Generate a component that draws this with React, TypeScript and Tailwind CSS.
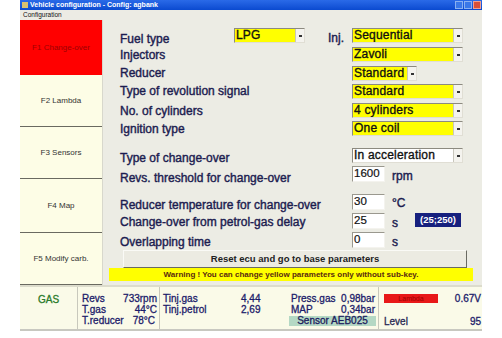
import React from "react";

const font = { fontFamily: '"Liberation Sans", Arial, sans-serif' };

function Arrow() {
  return (
    <div className="w-[9px] h-full bg-[#f4f3ee] border-l border-[#c8c6bc] flex items-center justify-center">
      <div className="w-[3px] h-[2px] bg-[#333]" />
    </div>
  );
}

function Drop({ text, w, white }: { text: string; w: string; white?: boolean }) {
  return (
    <div
      className={`${w} h-[15px] flex items-stretch border border-t-[#8c8a80] border-l-[#8c8a80] border-r-[#e0ded4] border-b-[#e0ded4] ${
        white ? "bg-white" : "bg-[#ffff00]"
      }`}
    >
      <div className="flex-1 pl-[1px] text-[12px] leading-[13px] text-[#111] [-webkit-text-stroke:0.35px_#111] tracking-[0.2px] overflow-hidden whitespace-nowrap">
        {text}
      </div>
      <Arrow />
    </div>
  );
}

function Input({ text }: { text: string }) {
  return (
    <div className="w-[33px] h-[16px] bg-white border border-t-[#9a988e] border-l-[#9a988e] border-r-[#f4f3ee] border-b-[#f4f3ee] text-[11.5px] leading-[13px] pl-[1px] text-[#111] [-webkit-text-stroke:0.2px_#111]">
      {text}
    </div>
  );
}

function Label({ children, w = "w-[232px]" }: { children: React.ReactNode; w?: string }) {
  return (
    <div className={`${w} shrink-0 text-[12px] leading-[14px] text-[#1c1c50] [-webkit-text-stroke:0.4px_#1c1c50] whitespace-nowrap`}>
      {children}
    </div>
  );
}

function Unit({ children }: { children: React.ReactNode }) {
  return <div className="ml-[7px] text-[12px] text-[#1c1c50] [-webkit-text-stroke:0.4px_#1c1c50] leading-[14px]">{children}</div>;
}

const tabs = ["F2 Lambda", "F3 Sensors", "F4 Map", "F5 Modify carb."];
const stat = "[-webkit-text-stroke:0.3px_#1c1c6a]";

export default function App() {
  return (
    <div className="w-[502px] h-[338px] bg-white overflow-hidden" style={font}>
      <div className="ml-[20px] w-[462px] flex flex-col">
        {/* title bar */}
        <div className="h-[10px] bg-gradient-to-b from-[#2a6ae8] to-[#0a4ad0] flex items-center justify-between">
          <div className="flex items-center">
            <div className="w-[6px] h-[6px] ml-[2px] bg-[#d8c070]" />
            <div className="ml-[2px] text-[7px] leading-[8px] font-bold text-white">
              Vehicle configuration - Config: agbank
            </div>
          </div>
          <div className="flex items-center gap-[1px] mr-[1px]">
            <div className="w-[8px] h-[8px] bg-[#3a78e8] border border-[#8ab0f0]" />
            <div className="w-[8px] h-[8px] bg-[#3a78e8] border border-[#8ab0f0]" />
            <div className="w-[8px] h-[8px] bg-[#d8503a] border border-[#f0a090]" />
          </div>
        </div>
        {/* menu */}
        <div className="h-[10px] bg-[#ecebe4] text-[6.5px] leading-[10px] pl-[3px] text-[#111]">Configuration</div>
        {/* body */}
        <div className="flex h-[265px]">
          <div className="w-[82px] shrink-0 flex flex-col bg-[#fdfde6]">
            <div className="h-[55px] bg-[#ff0000] flex items-center justify-center text-[8px] text-[#a00000]">
              F1 Change-over
            </div>
            {tabs.map((t, i) => (
              <div
                key={t}
                className={`flex items-center justify-center text-[8px] text-[#333] ${
                  i === 2 ? "h-[54px]" : "h-[52px]"
                } border-b border-[#6a6a60]`}
              >
                {t}
              </div>
            ))}
          </div>
          <div className="flex-1 bg-[#ecece4] border-l border-[#d8d8cc] flex flex-col pt-[8px]">
            <div className="pl-[17px] flex flex-col">
              <div className="h-[19px] flex items-start">
                <Label w="w-[114px]">
                  <span className="relative top-[4px]">Fuel type</span>
                </Label>
                <Drop text="LPG" w="w-[71px]" />
                <div className="ml-[23px] w-[24px] text-[12px] text-[#1c1c50] [-webkit-text-stroke:0.4px_#1c1c50] leading-[14px] mt-[3px]">Inj.</div>
                <Drop text="Sequential" w="w-[111px]" />
              </div>
              <div className="h-[19px] flex items-start">
                <Label>
                  <span className="relative top-[1px]">Injectors</span>
                </Label>
                <Drop text="Zavoli" w="w-[111px]" />
              </div>
              <div className="h-[18px] flex items-start">
                <Label>Reducer</Label>
                <Drop text="Standard" w="w-[65px]" />
              </div>
              <div className="h-[19px] flex items-start">
                <Label>Type of revolution signal</Label>
                <Drop text="Standard" w="w-[111px]" />
              </div>
              <div className="h-[18px] flex items-start">
                <Label>
                  <span className="relative top-[1px]">No. of cylinders</span>
                </Label>
                <Drop text="4 cylinders" w="w-[111px]" />
              </div>
              <div className="h-[19px] flex items-start">
                <Label>
                  <span className="relative top-[1px]">Ignition type</span>
                </Label>
                <Drop text="One coil" w="w-[111px]" />
              </div>
              <div className="h-[18px] mt-[8px] flex items-start">
                <Label>
                  <span className="relative top-[3px]">Type of change-over</span>
                </Label>
                <Drop text="In acceleration" w="w-[111px]" white />
              </div>
              <div className="h-[28px] flex items-start">
                <Label>
                  <span className="relative top-[5px]">Revs. threshold for change-over</span>
                </Label>
                <Input text="1600" />
                <Unit>
                  <span className="relative top-[3px]">rpm</span>
                </Unit>
              </div>
              <div className="h-[19px] flex items-start">
                <Label>
                  <span className="relative top-[4px]">Reducer temperature for change-over</span>
                </Label>
                <Input text="30" />
                <Unit>
                  <span className="relative top-[2px]">°C</span>
                </Unit>
              </div>
              <div className="h-[19px] flex items-start">
                <Label>
                  <span className="relative top-[2px]">Change-over from petrol-gas delay</span>
                </Label>
                <Input text="25" />
                <Unit>
                  <span className="relative top-[3px]">s</span>
                </Unit>
                <div className="ml-[17px] w-[46px] h-[14px] bg-[#16207e] text-white text-[9.5px] font-bold leading-[14px] text-center">
                  (25;250)
                </div>
              </div>
              <div className="h-[18px] flex items-start">
                <Label>
                  <span className="relative top-[3px]">Overlapping time</span>
                </Label>
                <Input text="0" />
                <Unit>
                  <span className="relative top-[3px]">s</span>
                </Unit>
              </div>
            </div>
            <div className="ml-[20px] w-[344px] h-[18px] bg-[#ecebe2] border border-t-[#fafaf6] border-l-[#fafaf6] border-r-[#6a6a62] border-b-[#6a6a62] text-[9.5px] font-bold text-[#222] text-center leading-[16px]">
              Reset ecu and go to base parameters
            </div>
            <div className="ml-[6px] w-[364px] h-[13px] bg-[#ffff00] text-[8px] font-bold text-[#5a2a10] text-center leading-[13px]">
              Warning ! You can change yellow parameters only without sub-key.
            </div>
          </div>
        </div>
        {/* status */}
        <div className="h-[46px] flex bg-[#fafae8] border-t-[2px] border-t-[#dcdccc] border-b-[2px] border-b-[#c8c8c0] text-[10px] text-[#1c1c6a] leading-[11px] whitespace-nowrap">
          <div className="w-[58px] border-r border-[#c8c8bc] flex justify-center pt-[7px] text-[#2a7a2a] text-[10px] [-webkit-text-stroke:0.3px_#2a7a2a]">GAS</div>
          <div className={`w-[82px] border-r border-[#c8c8bc] pl-[4px] pr-[2px] pt-[6px] flex flex-col ${stat}`}>
            <div className="flex justify-between"><span>Revs</span><span>733rpm</span></div>
            <div className="flex justify-between"><span>T.gas</span><span>44°C</span></div>
            <div className="flex justify-between"><span>T.reducer</span><span className="mr-[2px]">78°C</span></div>
          </div>
          <div className={`w-[124px] pl-[3px] pt-[6px] flex flex-col ${stat}`}>
            <div className="flex"><span className="w-[78px]">Tinj.gas</span><span>4,44</span></div>
            <div className="flex"><span className="w-[78px]">Tinj.petrol</span><span>2,69</span></div>
          </div>
          <div className={`w-[95px] border-r border-[#c8c8bc] pl-[5px] pr-[2px] pt-[6px] flex flex-col ${stat}`}>
            <div className="flex justify-between pl-[2px] pr-[1px]"><span>Press.gas</span><span>0,98bar</span></div>
            <div className="flex justify-between pl-[2px] pr-[1px]"><span>MAP</span><span>0,34bar</span></div>
            <div className="mt-[1px] h-[10px] bg-[#b4d8c4] text-center leading-[10px] text-[#1c1c50]">Sensor AEB025</div>
          </div>
          <div className={`flex-1 pl-[5px] pr-[1px] pt-[6px] flex flex-col ${stat}`}>
            <div className="flex justify-between items-center">
              <div className="w-[54px] h-[9px] bg-[#e81818] text-[7px] leading-[9px] text-center text-[#a00000] [-webkit-text-stroke:0px]">Lambda</div>
              <span>0.67V</span>
            </div>
            <div className="flex justify-between mt-[12px]"><span className="text-[#333]">Level</span><span>95</span></div>
          </div>
        </div>
      </div>
    </div>
  );
}
